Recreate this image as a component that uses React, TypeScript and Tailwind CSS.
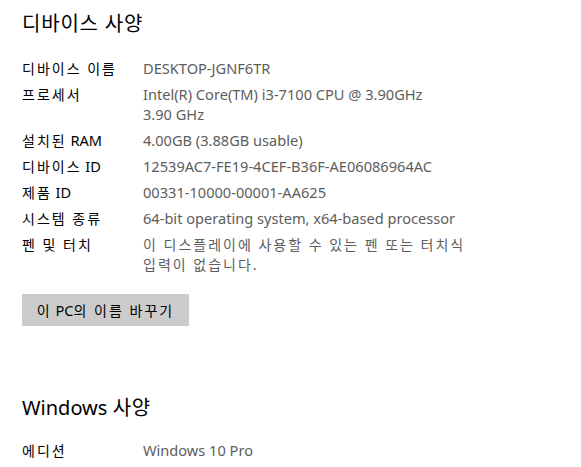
import React from "react";

const font = { fontFamily: '"Noto Sans", "Noto Sans CJK KR", sans-serif' };

const HANGUL = /([\uAC00-\uD7A3]+(?: +[\uAC00-\uD7A3]+)*)/;

function K({ text, k }: { text: string; k: string }) {
  const parts = text.split(HANGUL);
  return (
    <>
      {parts.map((p, i) =>
        i % 2 === 1 ? (
          <span key={i} className={k}>
            {p}
          </span>
        ) : (
          <React.Fragment key={i}>{p}</React.Fragment>
        )
      )}
    </>
  );
}

const BODY_K = "text-[14px] leading-none tracking-[2px]";
const TITLE_K = "leading-none tracking-[0.8px]";

const rows: { label: string; value: string[] }[] = [
  { label: "디바이스 이름", value: ["DESKTOP-JGNF6TR"] },
  { label: "프로세서", value: ["Intel(R) Core(TM) i3-7100 CPU @ 3.90GHz", "3.90 GHz"] },
  { label: "설치된 RAM", value: ["4.00GB (3.88GB usable)"] },
  { label: "디바이스 ID", value: ["12539AC7-FE19-4CEF-B36F-AE06086964AC"] },
  { label: "제품 ID", value: ["00331-10000-00001-AA625"] },
  { label: "시스템 종류", value: ["64-bit operating system, x64-based processor"] },
  { label: "펜 및 터치", value: ["이 디스플레이에 사용할 수 있는 펜 또는 터치식", "입력이 없습니다."] },
];

export default function App() {
  return (
    <div className="w-[581px] h-[467px] overflow-hidden bg-white pl-[22px] pt-[10px]" style={font}>
      <div className="h-[28px] text-[20px] leading-[28px] text-black">
        <K text="디바이스 사양" k={TITLE_K} />
      </div>
      <div className="mt-[20px] flex flex-col gap-[6px]">
        {rows.map((r) => (
          <div key={r.label} className="flex text-[14.6px] leading-[20px]">
            <div className="w-[121px] shrink-0 text-black whitespace-nowrap">
              <div className="h-[20px]">
                <K text={r.label} k={BODY_K} />
              </div>
            </div>
            <div className="text-[#5d5d5d]">
              {r.value.map((v) => (
                <div key={v} className="h-[20px] whitespace-nowrap">
                  <K text={v} k={BODY_K} />
                </div>
              ))}
            </div>
          </div>
        ))}
      </div>
      <button className="mt-[20px] w-[167px] h-[32px] bg-[#cccccc] text-[14.6px] leading-[20px] text-black flex items-center justify-center whitespace-nowrap">
        <span>
          <K text="이 PC의 이름 바꾸기" k={BODY_K} />
        </span>
      </button>
      <div className="mt-[68px] h-[28px] text-[20px] leading-[28px] text-black">
        <K text="Windows 사양" k={TITLE_K} />
      </div>
      <div className="mt-[18px] flex text-[14.6px] leading-[20px]">
        <div className="w-[121px] shrink-0 text-black h-[20px]">
          <K text="에디션" k={BODY_K} />
        </div>
        <div className="text-[#5d5d5d] h-[20px]">Windows 10 Pro</div>
      </div>
    </div>
  );
}
